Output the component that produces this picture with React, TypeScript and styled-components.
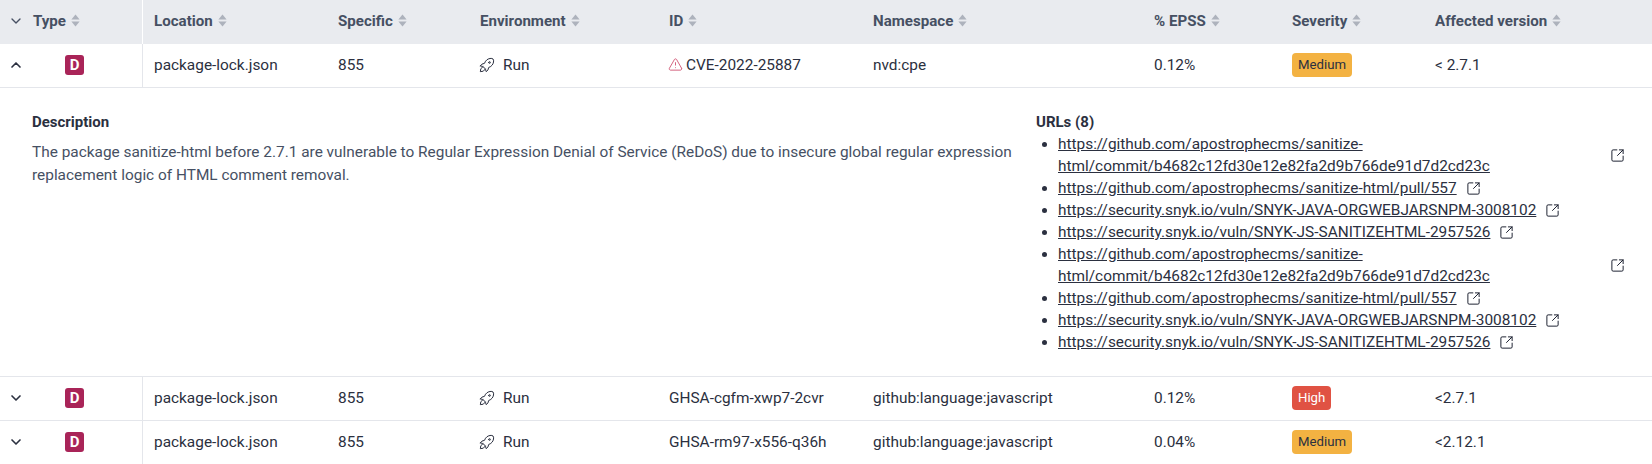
import React from 'react';
import styled, { createGlobalStyle } from 'styled-components';
import { ChevronDown, ChevronUp, SquareArrowOutUpRight, TriangleAlert } from 'lucide-react';
import { TbRocket } from 'react-icons/tb';

const GlobalStyle = createGlobalStyle`
  html, body {
    margin: 0;
    background: #fff;
    font-family: 'Roboto', 'Liberation Sans', sans-serif;
    font-size: 15.4px;
    color: #2b3040;
  }
  * { box-sizing: border-box; }
`;

const columns = '143px 184px 142px 189px 204px 281px 138px 143px 228px';

const Table = styled.div`
  width: 1652px;
  height: 464px;
  overflow: hidden;
`;

const HeaderRow = styled.div`
  display: grid;
  grid-template-columns: ${columns};
  height: 44px;
  padding-bottom: 3px;
  background: #e9ebef;
`;

const Row = styled.div`
  display: grid;
  grid-template-columns: ${columns};
  height: 44px;
  border-bottom: 1px solid #e4e6eb;
`;

const HeaderCell = styled.div`
  display: flex;
  align-items: center;
  gap: 5px;
  padding-left: 11px;
  font-weight: 700;
  font-size: 15.1px;
  color: #465063;
`;

const FirstHeaderCell = styled(HeaderCell)`
  padding-left: 8px;
  margin-bottom: -3px;
  padding-bottom: 3px;
  border-right: 1px solid #fff;
`;

const Cell = styled.div`
  display: flex;
  align-items: center;
  padding: 0 0 2px 11px;
  font-size: 15.4px;
`;

const TypeCell = styled.div`
  display: flex;
  align-items: center;
  padding: 0 0 1px 8px;
  border-right: 1px solid #e4e6eb;
`;

const Toggle = styled.span`
  display: flex;
  width: 16px;
  color: #2b3040;
`;

const HeaderToggle = styled(Toggle)`
  color: #465063;
  margin-right: 4px;
`;

const TypeBadge = styled.span`
  display: flex;
  align-items: center;
  justify-content: center;
  width: 19px;
  height: 20px;
  margin-left: 41px;
  border-radius: 3px;
  background: #a92458;
  color: #fff;
  font-weight: 700;
  font-size: 15px;
`;

const EnvIcon = styled.span`
  display: flex;
  margin: 0 6px 0 -3px;
  color: #2b3040;
`;

const AlertIcon = styled.span`
  display: flex;
  margin-right: 3px;
  margin-left: -1px;
  color: #c9385c;
`;

const Severity = styled.span<{ $level: 'medium' | 'high' }>`
  display: inline-flex;
  align-items: center;
  height: 24px;
  padding: 0 6px;
  border-radius: 4px;
  font-size: 13.2px;
  background: ${p => (p.$level === 'high' ? '#e05243' : '#f3b242')};
  color: ${p => (p.$level === 'high' ? '#fff' : '#2b3040')};
`;

const Details = styled.div`
  display: flex;
  height: 289px;
  padding: 23px 27px 0 32px;
  border-bottom: 1px solid #e4e6eb;
`;

const DescriptionBlock = styled.div`
  width: 1004px;
  padding-right: 20px;
`;

const BlockTitle = styled.div`
  font-weight: 700;
  font-size: 15px;
  line-height: 22px;
`;

const Paragraph = styled.p`
  margin: 8px 0 0;
  width: 985px;
  line-height: 23px;
  font-size: 15.4px;
  color: #465063;
`;

const UrlBlock = styled.div`
  flex: 1;
  min-width: 0;
`;

const UrlList = styled.ul`
  margin: 0;
  padding: 0 0 0 22px;
  line-height: 22px;
`;

const UrlItem = styled.li`
  font-size: 15.4px;
`;

const UrlLine = styled.span`
  display: inline-flex;
  align-items: center;
  gap: 8px;
  vertical-align: top;
  max-width: 100%;
`;

const UrlLink = styled.a`
  color: #2b3040;
  text-decoration: underline;
`;

const UrlIcon = styled.span`
  display: flex;
  flex: none;
  margin-left: 1px;
  color: #1f2433;
`;

const SortIcon = () => (
  <svg width="9" height="13" viewBox="0 0 9 13" fill="#adb2bc">
    <path d="M4.5 .5 L8.6 5.5 H.4 Z" />
    <path d="M4.5 12.5 L8.6 7.5 H.4 Z" />
  </svg>
);

const headers = ['Location', 'Specific', 'Environment', 'ID', 'Namespace', '% EPSS', 'Severity', 'Affected version'];

const urls = [
  'https://github.com/apostrophecms/sanitize-html/commit/b4682c12fd30e12e82fa2d9b766de91d7d2cd23c',
  'https://github.com/apostrophecms/sanitize-html/pull/557',
  'https://security.snyk.io/vuln/SNYK-JAVA-ORGWEBJARSNPM-3008102',
  'https://security.snyk.io/vuln/SNYK-JS-SANITIZEHTML-2957526',
];

type Vuln = {
  id: string;
  namespace: string;
  epss: string;
  level: 'medium' | 'high';
  severity: string;
  version: string;
  open?: boolean;
  alert?: boolean;
};

const rows: Vuln[] = [
  { id: 'CVE-2022-25887', namespace: 'nvd:cpe', epss: '0.12%', level: 'medium', severity: 'Medium', version: '< 2.7.1', open: true, alert: true },
  { id: 'GHSA-cgfm-xwp7-2cvr', namespace: 'github:language:javascript', epss: '0.12%', level: 'high', severity: 'High', version: '<2.7.1' },
  { id: 'GHSA-rm97-x556-q36h', namespace: 'github:language:javascript', epss: '0.04%', level: 'medium', severity: 'Medium', version: '<2.12.1' },
];

const VulnRow = ({ row }: { row: Vuln }) => (
  <Row>
    <TypeCell>
      <Toggle>{row.open ? <ChevronUp size={16} strokeWidth={2.5} /> : <ChevronDown size={16} strokeWidth={2.5} />}</Toggle>
      <TypeBadge>D</TypeBadge>
    </TypeCell>
    <Cell>package-lock.json</Cell>
    <Cell>855</Cell>
    <Cell>
      <EnvIcon><TbRocket size={20} strokeWidth={1.2} /></EnvIcon>
      Run
    </Cell>
    <Cell>
      {row.alert && <AlertIcon><TriangleAlert size={15} strokeWidth={1.25} /></AlertIcon>}
      {row.id}
    </Cell>
    <Cell>{row.namespace}</Cell>
    <Cell>{row.epss}</Cell>
    <Cell><Severity $level={row.level}>{row.severity}</Severity></Cell>
    <Cell>{row.version}</Cell>
  </Row>
);

export default function App() {
  return (
    <Table>
      <GlobalStyle />
      <HeaderRow>
        <FirstHeaderCell>
          <HeaderToggle><ChevronDown size={16} strokeWidth={2} /></HeaderToggle>
          Type
          <SortIcon />
        </FirstHeaderCell>
        {headers.map(h => (
          <HeaderCell key={h}>{h}<SortIcon /></HeaderCell>
        ))}
      </HeaderRow>
      <VulnRow row={rows[0]} />
      <Details>
        <DescriptionBlock>
          <BlockTitle>Description</BlockTitle>
          <Paragraph>
            The package sanitize-html before 2.7.1 are vulnerable to Regular Expression Denial of Service (ReDoS) due to insecure global regular expression replacement logic of HTML comment removal.
          </Paragraph>
        </DescriptionBlock>
        <UrlBlock>
          <BlockTitle>URLs (8)</BlockTitle>
          <UrlList>
            {[...urls, ...urls].map((u, i) => (
              <UrlItem key={i}>
                <UrlLine>
                  <UrlLink href="#">{u}</UrlLink>
                  <UrlIcon><SquareArrowOutUpRight size={15} strokeWidth={1.6} /></UrlIcon>
                </UrlLine>
              </UrlItem>
            ))}
          </UrlList>
        </UrlBlock>
      </Details>
      <VulnRow row={rows[1]} />
      <VulnRow row={rows[2]} />
    </Table>
  );
}
